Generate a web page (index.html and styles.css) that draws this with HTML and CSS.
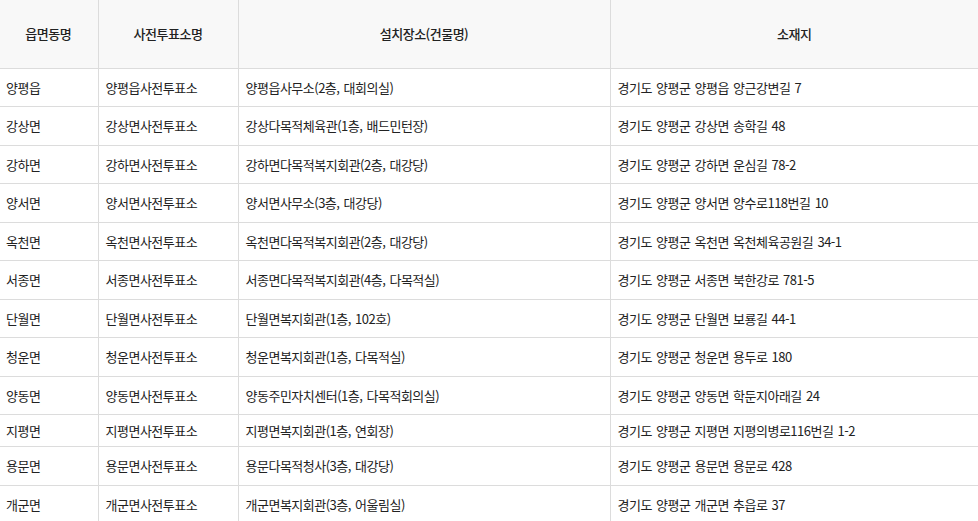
FILE: index.html
```html
<!DOCTYPE html>
<html lang="ko">
<head>
<meta charset="utf-8">
<title>사전투표소</title>
<link rel="stylesheet" href="styles.css">
</head>
<body>
<table class="vote-table">
  <colgroup>
    <col class="c1"><col class="c2"><col class="c3"><col class="c4">
  </colgroup>
  <thead>
    <tr><th>읍면동명</th><th>사전투표소명</th><th>설치장소(건물명)</th><th>소재지</th></tr>
  </thead>
  <tbody>
    <tr><td>양평읍</td><td>양평읍사전투표소</td><td>양평읍사무소(2층, 대회의실)</td><td>경기도 양평군 양평읍 양근강변길 7</td></tr>
    <tr><td>강상면</td><td>강상면사전투표소</td><td>강상다목적체육관(1층, 배드민턴장)</td><td>경기도 양평군 강상면 송학길 48</td></tr>
    <tr><td>강하면</td><td>강하면사전투표소</td><td>강하면다목적복지회관(2층, 대강당)</td><td>경기도 양평군 강하면 운심길 78-2</td></tr>
    <tr><td>양서면</td><td>양서면사전투표소</td><td>양서면사무소(3층, 대강당)</td><td>경기도 양평군 양서면 양수로118번길 10</td></tr>
    <tr><td>옥천면</td><td>옥천면사전투표소</td><td>옥천면다목적복지회관(2층, 대강당)</td><td>경기도 양평군 옥천면 옥천체육공원길 34-1</td></tr>
    <tr><td>서종면</td><td>서종면사전투표소</td><td>서종면다목적복지회관(4층, 다목적실)</td><td>경기도 양평군 서종면 북한강로 781-5</td></tr>
    <tr><td>단월면</td><td>단월면사전투표소</td><td>단월면복지회관(1층, 102호)</td><td>경기도 양평군 단월면 보룡길 44-1</td></tr>
    <tr><td>청운면</td><td>청운면사전투표소</td><td>청운면복지회관(1층, 다목적실)</td><td>경기도 양평군 청운면 용두로 180</td></tr>
    <tr><td>양동면</td><td>양동면사전투표소</td><td>양동주민자치센터(1층, 다목적회의실)</td><td>경기도 양평군 양동면 학둔지아래길 24</td></tr>
    <tr class="tight"><td>지평면</td><td>지평면사전투표소</td><td>지평면복지회관(1층, 연회장)</td><td>경기도 양평군 지평면 지평의병로116번길 1-2</td></tr>
    <tr><td>용문면</td><td>용문면사전투표소</td><td>용문다목적청사(3층, 대강당)</td><td>경기도 양평군 용문면 용문로 428</td></tr>
    <tr><td>개군면</td><td>개군면사전투표소</td><td>개군면복지회관(3층, 어울림실)</td><td>경기도 양평군 개군면 추읍로 37</td></tr>
  </tbody>
</table>
</body>
</html>
```

FILE: styles.css
```css
html, body {
  margin: 0;
  padding: 0;
  background: #ffffff;
}

body {
  font-family: "Noto Sans CJK KR", "Noto Sans", sans-serif;
  font-size: 13px;
  color: #222222;
  letter-spacing: -0.5px;
  word-spacing: 1px;
}

.vote-table {
  width: 978px;
  border-collapse: collapse;
  table-layout: fixed;
}

.c1 { width: 98px; }
.c2 { width: 140px; }
.c3 { width: 372px; }
.c4 { width: 368px; }

.vote-table th,
.vote-table td {
  border-left: 1px solid #dcdcdc;
  border-bottom: 1px solid #dcdcdc;
  padding: 0 7px;
  line-height: 17px;
  white-space: nowrap;
}

.vote-table th:first-child,
.vote-table td:first-child {
  border-left: none;
  padding-left: 6px;
}

.vote-table thead tr {
  height: 68px;
}

.vote-table th {
  background: #f8f8f8;
  font-weight: 500;
  text-align: center;
  color: #222222;
  padding-bottom: 1px;
}

.vote-table tbody tr {
  height: 38.5px;
}

.vote-table tbody tr.tight {
  height: 32px;
}

.vote-table td {
  text-align: left;
}
```
